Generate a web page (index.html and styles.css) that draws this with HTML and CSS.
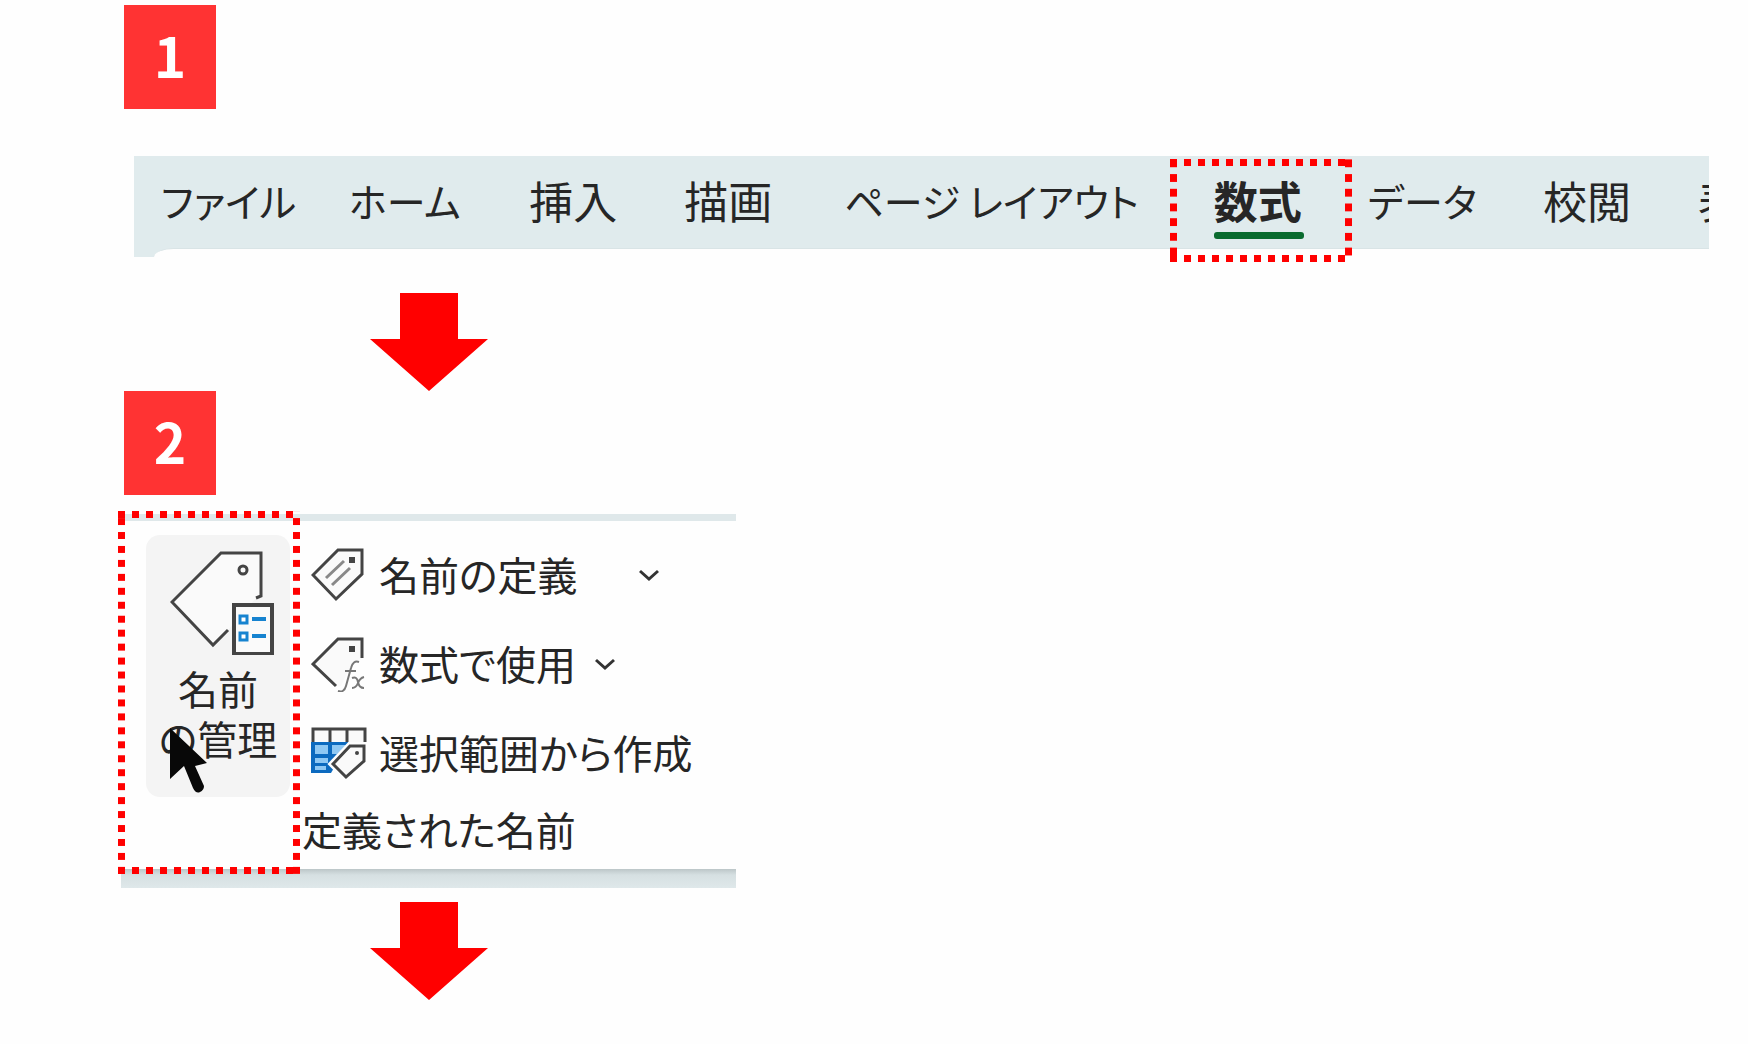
FILE: index.html
```html
<!DOCTYPE html>
<html lang="ja">
<head>
<meta charset="utf-8">
<meta name="viewport" content="width=device-width, initial-scale=1">
<title>名前の管理</title>
<link rel="stylesheet" href="styles.css">
</head>
<body>
<main class="guide">
  <section class="step">
    <div class="badge">1</div>
    <nav class="ribbon">
      <div class="tabs">
        <button class="tab kana" type="button">ファイル</button>
        <button class="tab kana" type="button">ホーム</button>
        <button class="tab" type="button">挿入</button>
        <button class="tab" type="button">描画</button>
        <button class="tab kana" type="button">ページ レイアウト</button>
        <button class="tab active" type="button">数式<span class="marker marker-tab"></span></button>
        <button class="tab kana" type="button">データ</button>
        <button class="tab" type="button">校閲</button>
        <button class="tab" type="button">表示</button>
      </div>
      <div class="sheet-edge"></div>
    </nav>
  </section>

  <svg class="arrow" viewBox="0 0 118 98" aria-hidden="true"><path d="M30 0h58v46h30L59 98 0 46h30z" fill="#f00"/></svg>

  <section class="step">
    <div class="badge">2</div>
    <div class="group">
      <div class="manager">
        <button class="big-button" type="button">
          <svg class="big-icon" viewBox="0 0 104 104" aria-hidden="true">
            <path d="M58 79 43 94 2 51 51 2h40v43l-5 2" fill="#fafafa" stroke="#444" stroke-width="3"/>
            <circle cx="73" cy="19" r="4" fill="none" stroke="#444" stroke-width="3"/>
            <path d="M64 54h38v49H64z" fill="#fafafa" stroke="#444" stroke-width="4"/>
            <path d="M70 65h7v7h-7zM70 82h7v7h-7z" fill="#fff" stroke="#1683d0" stroke-width="3"/>
            <path d="M82 68h14M82 85h14" stroke="#1683d0" stroke-width="4"/>
          </svg>
          <span>名前<br>の管理</span>
          <svg class="pointer" viewBox="0 0 40 67" aria-hidden="true"><path d="M1 1v51l14-13 9 22q3 6 7 4t4-6L26 39l12-3z" fill="#080808"/></svg>
        </button>
        <span class="marker marker-manager"></span>
      </div>
      <div class="commands">
        <button class="command wide" type="button">
          <svg class="icon" viewBox="0 0 56 56" aria-hidden="true">
            <path d="M27 3h24v24L25 52 2 28z" fill="#fafafa" stroke="#444" stroke-width="3"/>
            <path d="M38 10h6v6h-6z" fill="#444"/>
            <path d="m15 31 18-17M21 38l18-17" stroke="#888" stroke-width="3"/>
          </svg>
          <span>名前の定義</span>
          <svg class="chevron" viewBox="0 0 22 12" aria-hidden="true"><path d="m2 2 9 8 9-8" fill="none" stroke="#333" stroke-width="3"/></svg>
        </button>
        <button class="command" type="button">
          <svg class="icon" viewBox="0 0 56 56" aria-hidden="true">
            <path d="m25 51 5-1 12-25 9-2V3H27L2 28z" fill="#fafafa"/>
            <path d="M25 50 2 28 27 3h24v19" fill="none" stroke="#444" stroke-width="3"/>
            <path d="M38 10h6v6h-6z" fill="#444"/>
            <path d="M48 26q-6-2-8 6l-5 18q-2 7-8 5M34 35h11M41 42q5-2 6 4t6 6M53 41q-4 1-6 6t-6 5" fill="none" stroke="#777" stroke-width="2"/>
          </svg>
          <span>数式で使用</span>
          <svg class="chevron" viewBox="0 0 22 12" aria-hidden="true"><path d="m2 2 9 8 9-8" fill="none" stroke="#333" stroke-width="3"/></svg>
        </button>
        <button class="command" type="button">
          <svg class="icon" viewBox="0 0 56 56" aria-hidden="true">
            <path d="M2 4h53v14H2z" fill="#fafafa"/>
            <path d="M2 17V4h52v13M19 4v13M36 4v13" fill="none" stroke="#444" stroke-width="3"/>
            <path d="M0 17h38L20 48H0z" fill="#0c6abf"/>
            <path d="M4 20h13v9H4zM21 20h14l-9 9h-5zM4 33h13v5H4zM4 41h11v4H4z" fill="#8fc8f3"/>
            <path d="M39 21h14v15L35 52 22 39z" fill="none" stroke="#fefefe" stroke-width="8"/>
            <path d="M39 21h14v15L35 52 22 39z" fill="#fafafa" stroke="#444" stroke-width="3"/>
            <circle cx="46" cy="28" r="2" fill="#444"/>
          </svg>
          <span>選択範囲から作成</span>
        </button>
        <div class="group-label">定義された名前</div>
      </div>
    </div>
  </section>

  <svg class="arrow" viewBox="0 0 118 98" aria-hidden="true"><path d="M30 0h58v46h30L59 98 0 46h30z" fill="#f00"/></svg>
</main>
</body>
</html>
```
FILE: styles.css
```css
* {
  box-sizing: border-box;
}

body {
  margin: 0;
  background: #fefefe;
  color: #262626;
  font-family: "Noto Sans CJK JP", "Noto Sans", sans-serif;
  font-feature-settings: "palt";
}

button {
  margin: 0;
  padding: 0;
  border: 0;
  background: none;
  color: inherit;
  font: inherit;
  font-feature-settings: inherit;
  text-align: left;
  white-space: nowrap;
}

.guide {
  padding: 5px 39px 44px 121px;
}

.badge {
  width: 92px;
  height: 104px;
  margin-left: 3px;
  background: #f33;
  color: #fff;
  font-size: 55px;
  font-weight: 700;
  line-height: 98px;
  text-align: center;
}

.ribbon {
  margin: 47px 0 36px 13px;
  background: #e0ebed;
}

.tabs {
  display: grid;
  grid-template-columns: 188fr 180fr 155fr 160fr 369fr 154fr 175fr 155fr 11fr;
  height: 92px;
  padding-left: 27px;
}

.tab {
  position: relative;
  min-width: 0;
  padding-bottom: 5px;
  font-size: 44px;
  line-height: 80px;
}

.tab.kana {
  font-size: 39px;
}

.tab:last-child {
  overflow: hidden;
}

.active {
  font-weight: 700;
}

.active::after {
  content: "";
  position: absolute;
  left: 0;
  bottom: 9px;
  width: 90px;
  height: 7px;
  border-radius: 3px;
  background: #0a6b2f;
}

.sheet-edge {
  height: 9px;
  margin-left: 20px;
  border-top: 1px solid #d9e4e6;
  border-top-left-radius: 20px 9px;
  background: #fefefe;
}

/* Square-dotted frame around the control to click */
.marker {
  --dot: #f00 50%, transparent 50%;
  position: absolute;
  background:
    linear-gradient(90deg, var(--dot)) top / 14px 7px repeat-x,
    linear-gradient(90deg, var(--dot)) bottom / 14px 7px repeat-x,
    linear-gradient(var(--dot)) left / 7px 14px repeat-y,
    linear-gradient(var(--dot)) right / 7px 14px repeat-y;
  background-repeat: round no-repeat, round no-repeat, no-repeat round, no-repeat round;
  pointer-events: none;
}

.marker-tab {
  inset: 3px auto auto -44px;
  width: 182px;
  height: 103px;
}

.marker-manager {
  inset: -10px auto auto -3px;
  width: 182px;
  height: 363px;
}

.arrow {
  display: block;
  width: 118px;
  height: 98px;
  margin-left: 249px;
}

.group {
  display: flex;
  width: max-content;
  min-width: 615px;
  margin: 19px 0 14px;
  border-top: 7px solid #dfe8ea;
  background: linear-gradient(#bcc6c8, #d6e0e2 6px, #dfe8ea 19px) bottom / 100% 19px no-repeat;
  padding-bottom: 19px;
}

.manager {
  position: relative;
  width: 181px;
  padding: 14px 12px 0 25px;
}

.big-button {
  display: flex;
  flex-direction: column;
  align-items: center;
  position: relative;
  width: 144px;
  height: 262px;
  padding-top: 16px;
  border-radius: 14px;
  background: #f4f4f4;
  font-size: 40px;
  line-height: 50px;
  text-align: center;
}

.big-icon {
  width: 104px;
  height: 104px;
  margin: 0 0 8px 8px;
}

.pointer {
  position: absolute;
  left: 23px;
  top: 192px;
  width: 40px;
  height: 67px;
}

.commands {
  display: flex;
  flex-direction: column;
  padding-top: 9px;
}

.command {
  display: flex;
  align-items: center;
  height: 89px;
  padding-left: 9px;
  font-size: 40px;
  line-height: 60px;
}

.command span {
  padding-bottom: 2px;
}

.icon {
  width: 56px;
  height: 56px;
  margin-right: 12px;
}

.chevron {
  width: 22px;
  height: 12px;
  margin-left: 18px;
}

.wide .chevron {
  margin-left: 60px;
}

.group-label {
  height: 72px;
  font-size: 40px;
  line-height: 64px;
}
```
